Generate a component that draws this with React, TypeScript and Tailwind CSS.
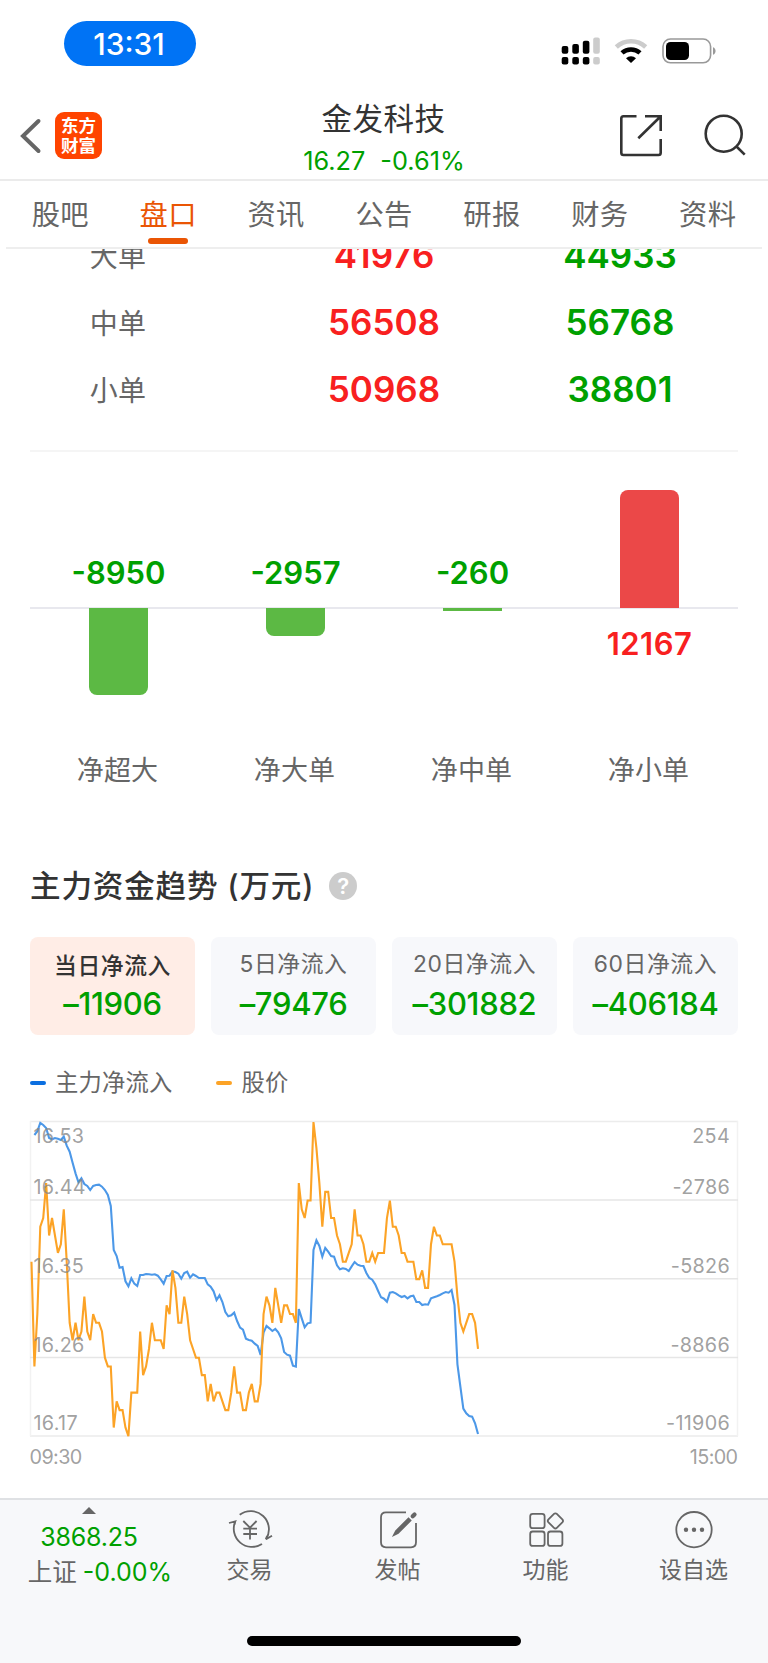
import clsx from "clsx";
import type { ReactNode } from "react";

const tabs = ["股吧", "盘口", "资讯", "公告", "研报", "财务", "资料"];

const orders = [
    { name: "大单", buy: "41976", sell: "44933" },
    { name: "中单", buy: "56508", sell: "56768" },
    { name: "小单", buy: "50968", sell: "38801" },
];

const netFlows = [
    { name: "净超大", value: -8950, height: 87 },
    { name: "净大单", value: -2957, height: 28 },
    { name: "净中单", value: -260, height: 3 },
    { name: "净小单", value: 12167, height: 118 },
];

const periods = [
    { name: "当日净流入", value: "–11906" },
    { name: "5日净流入", value: "–79476" },
    { name: "20日净流入", value: "–301882" },
    { name: "60日净流入", value: "–406184" },
];

// price per minute, in cents below 16.53
const price = [
    16, 28, 22, 12, 11, 7, 13, 11, 13, 15, 14, 10, 16, 23, 25, 23, 25, 24, 20,
    24, 25, 22, 23, 23, 24, 27, 28, 28, 35, 32, 33, 33, 35, 36, 31, 31, 31, 24,
    29, 28, 26, 23, 25, 25, 25, 26, 21, 22, 17, 19, 23, 23, 20, 22, 25, 26, 27,
    27, 29, 29, 32, 30, 32, 31, 31, 32, 33, 33, 31, 28, 31, 31, 33, 33, 31, 30,
    32, 32, 30, 22, 20, 21, 23, 19, 21, 23, 21, 21, 22, 22, 23, 7, 10, 11, 9, 9,
    0, 3, 7, 12, 8, 8, 11, 11, 13, 14, 16, 16, 15, 14, 10, 13, 13, 14, 16, 16,
    15, 16, 15, 15, 15, 11, 9, 12, 12, 13, 15, 15, 16, 16, 16, 18, 18, 17, 19,
    19, 14, 12, 13, 13, 14, 14, 14, 14, 16, 20, 23, 24, 23, 22, 22, 23, 26,
];

// main inflow per minute, starts one minute after the open
const inflow = [
    75, 64, 39, 45, 54, 84, 88, 84, 86, 90, 80, 107, 125, 158, 190, 217, 205,
    222, 228, 240, 228, 225, 224, 230, 240, 255, 288, 420, 438, 473, 471, 514,
    529, 505, 521, 528, 495, 495, 492, 493, 494, 493, 497, 508, 521, 498, 497,
    484, 486, 491, 506, 489, 485, 503, 493, 498, 504, 504, 504, 523, 530, 544,
    570, 556, 576, 606, 619, 616, 608, 633, 653, 659, 686, 690, 692, 701, 708,
    735, 668, 648, 655, 663, 657, 667, 685, 726, 734, 737, 767, 770, 597, 625,
    652, 640, 638, 420, 391, 408, 440, 414, 425, 438, 440, 466, 478, 475, 477,
    483, 469, 456, 464, 467, 468, 489, 504, 509, 523, 543, 562, 566, 575, 548,
    546, 550, 556, 561, 558, 565, 559, 557, 576, 576, 585, 583, 584, 565, 562,
    559, 555, 550, 546, 548, 540, 585, 763, 830, 896, 910, 918, 920, 940, 972,
];

const STEP = 708 / 241;
const toX = (i: number) => ((i + 0.5) * STEP).toFixed(2);

const pricePoints = price
    .map((p, i) => `${toX(i)},${(p * 8.73 + 1).toFixed(2)}`)
    .join(" ");
const inflowPoints = inflow
    .map((v, i) => `${toX(i + 1)},${((v - 33) / 3).toFixed(2)}`)
    .join(" ");

const axis = [
    { y: 21.5, left: "16.53", right: "254" },
    { y: 73, left: "16.44", right: "-2786" },
    { y: 151.5, left: "16.35", right: "-5826" },
    { y: 230.5, left: "16.26", right: "-8866" },
    { y: 309, left: "16.17", right: "-11906" },
];

const StatusBar = () => (
    <div className="flex h-[90px] items-start justify-between pr-[52px] pl-16">
        <div className="mt-[21px] flex h-[45px] w-[132px] items-center justify-center rounded-full bg-[#0073f5] pr-[2px] pt-px text-[30px] font-medium text-white">
            13:31
        </div>
        <svg
            className="mt-9"
            width="156"
            height="30"
            viewBox="560 36 156 30"
            fill="none"
        >
            <g fill="#000">
                <rect x="561.7" y="46" width="6.6" height="7.8" rx="2" />
                <rect x="572.3" y="44" width="6.6" height="9.8" rx="2" />
                <rect x="582.8" y="40.8" width="6.6" height="13" rx="2" />
                <rect x="561.7" y="57" width="6.6" height="7.6" rx="2" />
                <rect x="572.3" y="57" width="6.6" height="7.6" rx="2" />
                <rect x="582.8" y="57" width="6.6" height="7.6" rx="2" />
            </g>
            <g fill="#ccc">
                <rect x="593.2" y="37.4" width="6.6" height="16.4" rx="2" />
                <rect x="593.2" y="57" width="6.6" height="7.6" rx="2" />
            </g>
            <path
                d="M616.3 47a21.6 21.6 0 0 1 29.4 0"
                stroke="#ccc"
                strokeWidth="4.6"
            />
            <path
                d="M622 52.9a13.6 13.6 0 0 1 18 0"
                stroke="#000"
                strokeWidth="4.6"
            />
            <path d="M631 63l-5-4.8a7.2 7.2 0 0 1 10 0z" fill="#000" />
            <rect
                x="663"
                y="39"
                width="47.6"
                height="23.8"
                rx="7.5"
                stroke="#999"
                strokeWidth="1.6"
            />
            <rect x="666" y="42" width="23" height="18" rx="4.5" fill="#000" />
            <path d="M713 47.2c3.4 1 3.4 6.6 0 7.6z" fill="#999" />
        </svg>
    </div>
);

const Header = () => (
    <header className="flex h-[91px] justify-between border-b-2 border-[#ebebeb]">
        <div className="flex w-[280px] items-start pt-[22px] pl-5">
            <svg
                className="mt-[6px]"
                width="22"
                height="36"
                viewBox="20 118 22 36"
                fill="none"
            >
                <path
                    d="M38.5 121L23 136L38.5 151"
                    stroke="#666"
                    strokeWidth="4"
                    strokeLinecap="round"
                />
            </svg>
            <div className="ml-[13px] flex size-[47px] flex-col items-center justify-center rounded-[9px] bg-[#ff4400] text-[17.5px] leading-[19.5px] font-bold text-white">
                <span>东方</span>
                <span>财富</span>
            </div>
        </div>
        <div className="flex flex-col items-center">
            <h1 className="mt-[8px] pr-px text-[30.5px] leading-[42px] tracking-[0.5px] text-[#333]">
                金发科技
            </h1>
            <div className="flex gap-[15px] text-[25.3px] leading-[42px] text-[#00a000]">
                <span>16.27</span>
                <span>-0.61%</span>
            </div>
        </div>
        <div className="flex w-[280px] justify-end pr-5">
            <svg
                className="mt-[22px]"
                width="132"
                height="48"
                viewBox="616 112 132 48"
                fill="none"
                stroke="#333"
                strokeWidth="2.6"
            >
                <path d="M636.5 116.3H623.5q-2.2 0-2.2 2.2V152.8q0 2.2 2.2 2.2H658.5q2.2 0 2.2-2.2V139" />
                <path d="M645 116.3H660.7V131M660 117L638.3 138.3" />
                <circle cx="723.7" cy="133.7" r="18" />
                <path d="M736 146L744.7 154.7" />
            </svg>
        </div>
    </header>
);

const Tabs = () => (
    <nav className="mx-[6px] flex h-[68px] justify-center border-b-2 border-[#eee]">
        {tabs.map((tab) => {
            const active = tab === "盘口";
            return (
                <div
                    key={tab}
                    className={clsx(
                        "flex w-[107.9px] shrink-0 flex-col items-center pt-[13px] text-[28.3px] leading-[42px] tracking-[0.3px]",
                        active ? "text-[#ea5504]" : "text-[#666]"
                    )}
                >
                    {tab}
                    {active && (
                        <span className="mt-[2px] h-[6px] w-10 rounded-full bg-[#ea5504]" />
                    )}
                </div>
            );
        })}
    </nav>
);

const OrderTable = () => (
    <div className="mx-[30px] h-[203px] overflow-hidden border-b-2 border-[#f5f5f5]">
        <div className="-mt-[27px]">
            {orders.map((row) => (
                <div
                    key={row.name}
                    className="flex h-[67px] items-center text-center text-[35px] font-semibold"
                >
                    <span className="w-44 pt-[2px] text-[28px] font-normal tracking-[0.3px] text-[#666]">
                        {row.name}
                    </span>
                    <span className="ml-[60px] w-[236px] text-[#f82020]">
                        {row.buy}
                    </span>
                    <span className="w-[236px] text-[#00a000]">{row.sell}</span>
                </div>
            ))}
        </div>
    </div>
);

const NetFlowBars = () => (
    <div className="mx-[30px] flex h-[398px]">
        {netFlows.map(({ name, value, height }) => (
            <div
                key={name}
                className="flex w-[177px] flex-col items-center text-[31px] leading-[40px] font-semibold"
            >
                <div className="flex h-[157px] w-full flex-col items-center justify-end border-b-2 border-[#e8e8ee]">
                    {value > 0 ? (
                        <div
                            className="-mb-px w-[59px] rounded-t-lg bg-[#eb4848]"
                            style={{ height }}
                        />
                    ) : (
                        <span className="mb-[14px] text-[#00a000]">{value}</span>
                    )}
                </div>
                <div className="flex h-[142px] flex-col items-center">
                    {value > 0 ? (
                        <span className="mt-[15px] tracking-[0.5px] text-[#f82020]">
                            {value}
                        </span>
                    ) : (
                        <div
                            className={clsx(
                                "-mt-px w-[59px] bg-[#5cb944]",
                                height > 10 && "rounded-b-lg"
                            )}
                            style={{ height }}
                        />
                    )}
                </div>
                <span className="pr-[2px] text-[27px] font-normal tracking-[0.2px] text-[#666]">
                    {name}
                </span>
            </div>
        ))}
    </div>
);

const LegendItem = ({ dot, text }: { dot: ReactNode; text: string }) => (
    <div className="flex items-center gap-[9px] text-[23.3px] tracking-[0.2px] text-[#666]">
        {dot}
        {text}
    </div>
);

const TrendChart = () => (
    <svg
        className="block"
        width="710"
        height="352"
        viewBox="-1 -1 710 352"
        fill="none"
    >
        <path d="M0 .5H708M0 315H708" stroke="#ececec" strokeWidth="1.5" />
        <path d="M.5 0V315M707.5 0V315" stroke="#f2f2f2" strokeWidth="1.5" />
        <path
            d="M0 79H708M0 157.7H708M0 236.5H708"
            stroke="#e6e6e6"
            strokeWidth="1.6"
        />
        <polyline points={inflowPoints} stroke="#4c98e8" strokeWidth="2.1" />
        <polyline points={pricePoints} stroke="#fca326" strokeWidth="2.1" />
        <g fill="#888" fillOpacity="0.8" fontSize="19.8" letterSpacing="0.3">
            {axis.map((a) => (
                <text key={a.left} x="3.5" y={a.y}>
                    {a.left}
                </text>
            ))}
            {axis.map((a) => (
                <text key={a.right} x="700" y={a.y} textAnchor="end">
                    {a.right}
                </text>
            ))}
            <text x="-0.5" y="342.5" letterSpacing="-0.6">
                09:30
            </text>
            <text x="707.5" y="342.5" textAnchor="end" letterSpacing="-0.6">
                15:00
            </text>
        </g>
    </svg>
);

const Trend = () => (
    <section className="mx-[30px] h-[648px]">
        <div className="flex h-[72px] items-center gap-[15px]">
            <h2 className="text-[30.6px] font-medium tracking-[0.8px] whitespace-pre text-[#333]">
                主力资金趋势 (万元)
            </h2>
            <span className="flex size-7 items-center justify-center rounded-full bg-[#ccc] text-[22px] leading-none font-semibold text-white">
                ?
            </span>
        </div>
        <div className="mt-[15px] grid grid-cols-4 gap-4">
            {periods.map((p, i) => (
                <div
                    key={p.name}
                    className={clsx(
                        "flex h-[98px] flex-col items-center rounded-lg",
                        i === 0 ? "bg-[#ffede6] pt-[13px]" : "bg-[#f7f8fb] pt-[11px]"
                    )}
                >
                    <span
                        className={clsx(
                            "text-[22.8px] leading-[32px] tracking-[0.6px]",
                            i === 0
                                ? "font-medium text-[#333]"
                                : "mb-[2px] text-[#666]"
                        )}
                    >
                        {p.name}
                    </span>
                    <span className="text-[31px] leading-[44px] font-medium tracking-[-0.3px] text-[#00a000]">
                        {p.value}
                    </span>
                </div>
            ))}
        </div>
        <div className="mt-[31px] mb-[20px] flex h-[34px] items-center gap-[44px]">
            <LegendItem
                dot={<i className="h-1 w-4 rounded-full bg-[#0b6fe0]" />}
                text="主力净流入"
            />
            <LegendItem
                dot={<i className="h-1 w-4 rounded-full bg-[#fca326]" />}
                text="股价"
            />
        </div>
        <div className="-mx-px">
            <TrendChart />
        </div>
    </section>
);

const NavItem = ({ icon, text }: { icon: ReactNode; text: string }) => (
    <div className="flex w-[148px] flex-col items-center pt-2">
        <svg
            width="48"
            height="44"
            viewBox="0 0 48 44"
            fill="none"
            stroke="#666"
            strokeWidth="1.8"
        >
            {icon}
        </svg>
        <span className="mt-[2px] pr-px text-[23px] leading-[32px] text-[#666]">
            {text}
        </span>
    </div>
);

const BottomBar = () => (
    <footer className="flex h-[165px] flex-col border-t-2 border-[#dfe1e4] bg-[#f7f8fa]">
        <div className="flex">
            <div className="flex w-44 flex-col items-center pl-[2px] pt-[7px] text-[25px] leading-[34px] text-[#00a000]">
                <svg width="14" height="7" viewBox="0 0 14 7">
                    <path d="M0 7L7 0L14 7z" fill="#666" />
                </svg>
                <span className="mt-[6px] tracking-[-0.2px]">3868.25</span>
                <span className="mt-px flex pl-[22px] whitespace-nowrap">
                    <span className="mr-[6px] text-[24.5px] text-[#666]">
                        上证
                    </span>
                    -0.00%
                </span>
            </div>
            <NavItem
                text="交易"
                icon={
                    <>
                        <path d="M13.7 6.7A18.3 18.3 0 0 1 40 31.3L46 27.7" />
                        <path d="M36 36A18.3 18.3 0 0 1 9.3 13.3L3 15M9.3 13.3L8.6 16.5M40 31.3L41 28" />
                        <path d="M17.3 13L24 19.7L30.6 13M24 19.7V31.5M17.3 20.7H31M17.3 26H31" />
                    </>
                }
            />
            <NavItem
                text="发帖"
                icon={
                    <>
                        <path d="M32 4.3H12q-5 0-5 5V34.3q0 5 5 5H37q5 0 5-5V15" />
                        <path
                            d="M20 27L22 23L34.5 10.5L36.5 12.5L24 25z"
                            fill="#666"
                        />
                        <path
                            d="M38.7 8.2L40.5 6.4"
                            strokeWidth="4.2"
                            strokeLinecap="round"
                        />
                    </>
                }
            />
            <NavItem
                text="功能"
                icon={
                    <>
                        <rect x="8.2" y="5.8" width="14.4" height="14.4" rx="2.5" />
                        <rect x="8.2" y="23.5" width="14.4" height="14.4" rx="2.5" />
                        <rect x="26" y="23.5" width="14.4" height="14.4" rx="2.5" />
                        <rect
                            x="27.5"
                            y="7"
                            width="11.8"
                            height="11.8"
                            rx="2"
                            transform="rotate(45 33.4 12.9)"
                        />
                    </>
                }
            />
            <NavItem
                text="设自选"
                icon={
                    <>
                        <circle cx="24" cy="21.7" r="17.7" />
                        <g fill="#666" stroke="none">
                            <circle cx="16" cy="21.7" r="2.2" />
                            <circle cx="24" cy="21.7" r="2.2" />
                            <circle cx="32" cy="21.7" r="2.2" />
                        </g>
                    </>
                }
            />
        </div>
        <div className="mx-auto mt-auto mb-[17px] h-[10px] w-[274px] rounded-full bg-black" />
    </footer>
);

export default function App() {
    return (
        <div className="flex h-[1663px] w-[768px] flex-col overflow-hidden bg-white font-['Inter','Noto_Sans_CJK_SC',sans-serif]">
            <StatusBar />
            <Header />
            <Tabs />
            <OrderTable />
            <NetFlowBars />
            <Trend />
            <BottomBar />
        </div>
    );
}
